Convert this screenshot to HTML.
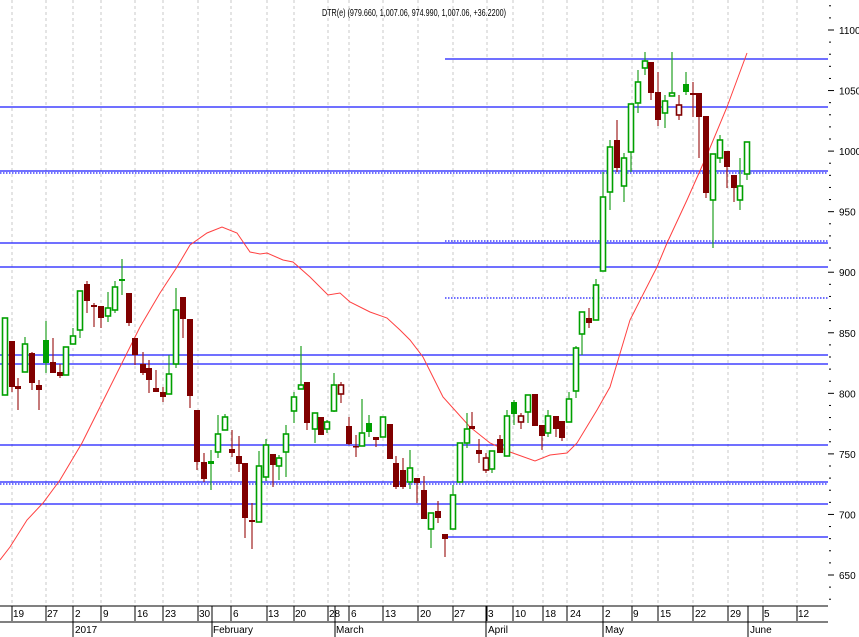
<!DOCTYPE html>
<html><head><meta charset="utf-8"><style>
html,body{margin:0;padding:0;background:#fff;}
svg{display:block;font-family:"Liberation Sans",sans-serif;}
</style></head><body>
<svg id="c" width="859" height="637" viewBox="0 0 859 637" xmlns="http://www.w3.org/2000/svg">
<g id="grid" stroke="#c8c8c8" stroke-width="1" stroke-dasharray="3,3"></g>
<text x="414" y="16" font-size="10.5" text-anchor="middle" textLength="184" lengthAdjust="spacingAndGlyphs" fill="#000">DTR(e) (979.660, 1,007.06, 974.990, 1,007.06, +36.2200)</text>
<g id="hl" stroke="#1a1aff" stroke-width="1.3"></g>
<polyline fill="none" stroke="#ff4040" stroke-width="1" points="0,560 10,547 27,520 43,503 60,480 82,443 100,407 120,367 140,327 160,293 177,267 190,245 207,233 222,227 237,233 250,252 260,254 267,253 283,260 293,262 310,277 328,295 340,293 350,302 370,312 387,318 400,330 410,340 423,357 443,397 470,427 490,443 510,452 535,461 550,455 567,453 577,443 597,410 610,387 630,320 657,267 667,243 687,200 707,155 727,107 747,53"/>
<g id="cs"></g>
<g id="ax" stroke="#000" stroke-width="1"></g>
<g font-size="10" fill="#000" id="lab"></g>
</svg>
<script>
var NS="http://www.w3.org/2000/svg";
function el(p,t,a){var e=document.createElementNS(NS,t);for(var k in a)e.setAttribute(k,a[k]);document.getElementById(p).appendChild(e);return e;}
[12,46,73,101,135,163,198,231,267,294,328,349,383,418,453,487,513,543,567,603,632,658,693,728,763,797].forEach(function(x){el('grid','line',{x1:x,y1:0,x2:x,y2:605});});
[[59,445,0],[107,0,0],[171,0,0],[173,0,1],[243,0,0],[241,445,1],[267,0,0],[298,445,1],[355,0,0],[364,0,0],[445,0,0],[482,0,0],[484,0,1],[504,0,0],[537,445,0]].forEach(function(h){var a={x1:h[1],y1:h[0],x2:828,y2:h[0]};if(h[2])a['stroke-dasharray']='1.5,1.5';el('hl','line',a);});
var C=[[5,318,395,318,395,'g'],[12,341,387,341,392,'d'],[18,386,389,378,410,'d'],[25,344,372,337,372,'g'],[32,353,383,352,390,'d'],[39,385,390,380,410,'d'],[46,340,363,321,373,'G'],[53,362,373,338,373,'d'],[60,372,376,364,378,'d'],[66,347,375,347,375,'g'],[73,336,344,328,344,'g'],[80,291,330,291,338,'g'],[87,284,301,281,313,'d'],[94,305,307,303,327,'d'],[101,306,318,306,328,'d'],[108,308,316,292,322,'g'],[115,287,310,281,313,'g'],[122,279,281,259,295,'G'],[129,293,323,293,326,'d'],[135,338,355,338,365,'d'],[143,364,373,352,375,'d'],[149,368,380,360,393,'d'],[156,388,392,370,392,'d'],[163,392,397,387,402,'d'],[169,374,394,355,394,'g'],[176,310,364,288,368,'g'],[183,297,319,297,338,'d'],[190,319,396,319,408,'d'],[197,410,462,410,470,'d'],[204,462,479,453,482,'d'],[211,461,464,450,490,'G'],[218,434,452,415,458,'g'],[225,417,430,414,430,'g'],[232,449,453,430,457,'d'],[239,456,464,436,472,'d'],[245,463,518,463,538,'d'],[252,520,522,503,549,'d'],[259,466,522,451,522,'g'],[266,445,477,439,481,'g'],[273,454,465,454,487,'d'],[279,458,466,455,480,'g'],[286,434,452,425,477,'g'],[294,397,411,392,423,'g'],[301,385,389,346,389,'g'],[307,382,423,382,430,'d'],[315,413,429,413,443,'g'],[321,417,435,417,435,'d'],[327,422,429,420,433,'g'],[334,385,411,373,412,'g'],[341,385,394,382,403,'r'],[349,426,444,417,445,'d'],[356,446,447,435,457,'d'],[362,433,446,399,446,'g'],[369,423,432,415,437,'G'],[376,437,440,437,447,'d'],[383,417,437,417,437,'g'],[390,424,459,424,459,'d'],[396,463,487,456,489,'d'],[403,470,487,458,489,'d'],[410,468,482,450,489,'g'],[417,478,483,478,503,'d'],[424,490,519,476,519,'d'],[431,513,529,513,548,'g'],[438,511,518,501,523,'d'],[445,534,539,534,557,'d'],[453,495,529,485,529,'g'],[460,443,482,443,482,'g'],[467,429,443,413,448,'g'],[472,426,429,412,429,'d'],[479,450,454,439,463,'d'],[486,458,470,453,473,'r'],[492,451,469,451,473,'g'],[500,439,453,435,453,'d'],[507,416,456,410,456,'g'],[514,402,414,400,425,'G'],[521,416,422,413,429,'r'],[528,395,412,395,423,'g'],[535,394,426,394,426,'d'],[542,425,436,425,450,'d'],[548,416,433,410,437,'g'],[556,416,429,416,437,'d'],[562,421,438,421,441,'d'],[569,399,422,392,422,'g'],[576,348,391,346,398,'g'],[582,312,334,312,355,'g'],[589,318,323,308,328,'d'],[596,285,320,279,320,'g'],[603,197,271,172,271,'g'],[610,147,192,140,210,'g'],[617,140,168,120,172,'d'],[624,158,186,153,202,'g'],[631,104,152,104,172,'g'],[638,82,103,70,113,'g'],[645,61,68,52,75,'g'],[651,62,93,62,100,'d'],[658,92,120,72,126,'d'],[665,101,113,95,128,'g'],[672,93,96,52,96,'g'],[679,105,115,95,120,'r'],[686,84,92,72,95,'G'],[693,93,95,82,117,'d'],[699,93,117,93,158,'d'],[706,116,193,116,198,'d'],[713,154,200,154,248,'g'],[720,140,158,135,163,'g'],[727,151,167,151,188,'d'],[734,175,188,175,202,'d'],[740,186,200,158,210,'g'],[747,142,174,142,180,'g']];
C.forEach(function(c){var x=c[0],t=c[5];var col=(t=='d'||t=='r')?'#800000':'#00a000';var wc=(t=='d'||t=='r')?'#a02020':'#20a020';
el('cs','line',{x1:x,y1:c[3],x2:x,y2:c[4],stroke:wc,'stroke-width':1.2});
var h=Math.max(c[2]-c[1],1.5);
if(t=='d'||t=='G')el('cs','rect',{x:x-3,y:c[1],width:6,height:h,fill:col});
else el('cs','rect',{x:x-2.5,y:c[1],width:5,height:h,fill:'#fff',stroke:col,'stroke-width':1.6});});
el('ax','line',{x1:0,y1:606,x2:828,y2:606});
el('ax','line',{x1:0,y1:622,x2:828,y2:622});
[73,212,335,486,603,748].forEach(function(x){el('ax','line',{x1:x,y1:606,x2:x,y2:637});});
[12,46,73,101,135,163,198,231,267,294,328,349,383,418,453,487,513,543,567,603,632,658,693,728,763,797].forEach(function(x){el('ax','line',{x1:x,y1:606,x2:x,y2:621,stroke:'#000'});});
for(var p=1130;p>=630;p-=10){var y=30+(1100-p)*1.2111;if(y<2||y>600)continue;var maj=(p%50==0);el('ax','line',{x1:maj?828:829,y1:y,x2:maj?834:831,y2:y});if(maj){var t=el('lab','text',{x:839,y:y+4});t.textContent=p;}}
var d=[[13,'19'],[47,'27'],[75,'2'],[103,'9'],[137,'16'],[165,'23'],[199,'30'],[233,'6'],[268,'13'],[295,'20'],[329,'28'],[351,'6'],[385,'13'],[420,'20'],[454,'27'],[488,'3'],[515,'10'],[545,'18'],[570,'24'],[605,'2'],[633,'9'],[660,'15'],[695,'22'],[730,'29'],[764,'5'],[798,'12']];
d.forEach(function(a){var t=el('lab','text',{x:a[0],y:617});t.textContent=a[1];});
[[75,'2017'],[213,'February'],[336,'March'],[488,'April'],[605,'May'],[750,'June']].forEach(function(a){var t=el('lab','text',{x:a[0],y:633});t.textContent=a[1];});
</script>
</body></html>
